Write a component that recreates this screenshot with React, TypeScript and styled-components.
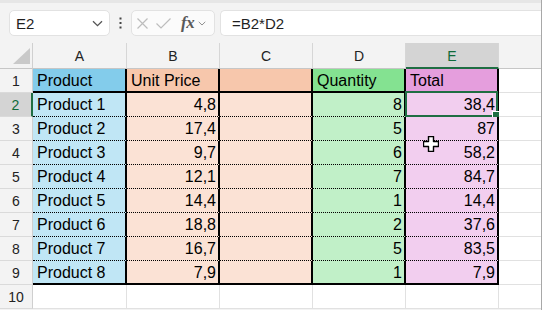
import React from 'react';
import styled, { createGlobalStyle } from 'styled-components';

const GlobalStyle = createGlobalStyle`
  html, body { margin: 0; padding: 0; background: #ffffff; }
  body { font-family: "Liberation Sans", Arial, sans-serif; }
`;

const Page = styled.div`
  width: 542px;
  height: 310px;
  box-sizing: border-box;
  border-right: 1px solid #a8a8a8;
  overflow: hidden;
  background: #f3f3f3;
  display: flex;
  flex-direction: column;
`;

const Toolbar = styled.div`
  height: 43px;
  flex: none;
  box-sizing: border-box;
  border-top: 3px solid #e6e6e6;
  padding: 7px 0 0 9px;
  display: flex;
  align-items: flex-start;
`;

const NameBox = styled.div`
  width: 101px;
  height: 26px;
  box-sizing: border-box;
  background: #fff;
  border: 1px solid #e2e2e2;
  border-radius: 5px;
  display: flex;
  align-items: center;
  justify-content: space-between;
  padding: 0 6px;
  font-size: 15px;
  color: #1f1f1f;
`;

const DotsWrap = styled.div`
  width: 21px;
  height: 26px;
  display: flex;
  align-items: center;
  justify-content: center;
`;

const FxBox = styled.div`
  width: 84px;
  height: 26px;
  box-sizing: border-box;
  background: #fbfbfb;
  border: 1px solid #e2e2e2;
  border-radius: 5px;
  display: flex;
  align-items: center;
  padding-left: 5px;
  gap: 8px;
`;

const FxLabel = styled.span`
  font-family: "Liberation Serif", "DejaVu Serif", serif;
  font-style: italic;
  font-weight: bold;
  font-size: 17px;
  color: #5a5a5a;
  margin-left: 2px;
  margin-right: -4px;
  letter-spacing: -0.5px;
`;

const Formula = styled.div`
  flex: 1;
  margin-left: 5px;
  height: 26px;
  box-sizing: border-box;
  background: #fff;
  border: 1px solid #e2e2e2;
  border-right: none;
  border-radius: 5px 0 0 5px;
  display: flex;
  align-items: center;
  padding-left: 11px;
  font-size: 15px;
  color: #1f1f1f;
`;

const Sheet = styled.div`
  position: relative;
  display: grid;
  grid-template-columns: 33px 94px 93px 93px 93px 93px 93px;
  grid-template-rows: 26px repeat(10, 24px);
  font-family: "Liberation Sans", Arial, sans-serif;
`;

const Corner = styled.div`
  box-sizing: border-box;
  border-right: 1px solid #d0d0d0;
  border-bottom: 1px solid #c6c6c6;
  display: flex;
  align-items: flex-end;
  justify-content: flex-end;
  padding: 0 2px 4px 0;
`;

const ColHead = styled.div<{ $active?: boolean }>`
  box-sizing: border-box;
  background: ${p => (p.$active ? '#d4d4d4' : '#f3f3f3')};
  color: ${p => (p.$active ? '#0f6b3a' : '#222')};
  border-right: 1px solid #d6d6d6;
  border-bottom: ${p => (p.$active ? '2px solid #1f6e43' : '1px solid #c6c6c6')};
  text-align: center;
  font-size: 14px;
  line-height: 16px;
  padding-top: 5px;
`;

const RowHead = styled.div<{ $active?: boolean }>`
  box-sizing: border-box;
  background: ${p => (p.$active ? '#d4d4d4' : '#f3f3f3')};
  color: ${p => (p.$active ? '#0f6b3a' : '#222')};
  border-right: ${p => (p.$active ? '2px solid #1f6e43' : '1px solid #cfcfcf')};
  border-bottom: 1px solid #dadada;
  text-align: center;
  font-size: 14px;
  line-height: 16px;
  padding-top: 4px;
`;

type Line = 'thick' | 'dotted' | 'grid';

const lineCss = (l: Line) =>
  l === 'thick' ? '2px solid #000' : l === 'dotted' ? '1px dotted #000' : '1px solid #e1e1e1';

const Cell = styled.div<{ $fill?: string; $num?: boolean; $bottom: Line; $right: Line }>`
  position: relative;
  box-sizing: border-box;
  background: ${p => p.$fill ?? '#fff'};
  border-right: ${p => lineCss(p.$right)};
  border-bottom: ${p => lineCss(p.$bottom)};
  padding: 3px 2px 0 4px;
  font-size: 16px;
  line-height: 18px;
  color: #000;
  text-align: ${p => (p.$num ? 'right' : 'left')};
  white-space: nowrap;
`;

const Selection = styled.div`
  position: absolute;
  left: -1px;
  top: -2px;
  right: -1px;
  bottom: -1px;
  border: 2px solid #1f6e43;
  pointer-events: none;
`;

const Handle = styled.div`
  position: absolute;
  right: -4px;
  bottom: -4px;
  width: 6px;
  height: 6px;
  background: #1f6e43;
  border: 1px solid #fff;
  box-sizing: content-box;
`;

const Cursor = styled.svg`
  position: absolute;
  left: 423px;
  top: 93px;
`;

const fills = {
  a1: '#83CCEB',
  a: '#C0E6F5',
  b1: '#F7C7AC',
  b: '#FBE2D5',
  d1: '#84E291',
  d: '#C1F0C8',
  e1: '#E59EDD',
  e: '#F2CEEF',
};

const data: [string, string, string, string][] = [
  ['Product 1', '4,8', '8', '38,4'],
  ['Product 2', '17,4', '5', '87'],
  ['Product 3', '9,7', '6', '58,2'],
  ['Product 4', '12,1', '7', '84,7'],
  ['Product 5', '14,4', '1', '14,4'],
  ['Product 6', '18,8', '2', '37,6'],
  ['Product 7', '16,7', '5', '83,5'],
  ['Product 8', '7,9', '1', '7,9'],
];

const Chevron = ({ w = 11, color = '#555' }: { w?: number; color?: string }) => (
  <svg width={w} height={7} viewBox="0 0 11 7">
    <path d="M1 1.2 L5.5 5.6 L10 1.2" fill="none" stroke={color} strokeWidth="1.3" />
  </svg>
);

export default function App() {
  const cols = ['A', 'B', 'C', 'D', 'E'];
  return (
    <>
      <GlobalStyle />
      <Page>
        <Toolbar>
          <NameBox>
            <span>E2</span>
            <Chevron />
          </NameBox>
          <DotsWrap>
            <svg width="3" height="12" viewBox="0 0 3 12">
              <rect x="0.5" y="0.5" width="2" height="2" fill="#444" />
              <rect x="0.5" y="5" width="2" height="2" fill="#444" />
              <rect x="0.5" y="9.5" width="2" height="2" fill="#444" />
            </svg>
          </DotsWrap>
          <FxBox>
            <svg width="11" height="11" viewBox="0 0 11 11">
              <path d="M0.5 0.5 L10.5 10.5 M10.5 0.5 L0.5 10.5" stroke="#bdbdbd" strokeWidth="1.2" />
            </svg>
            <svg width="15" height="11" viewBox="0 0 15 11">
              <path d="M0.5 5.5 L5 10 L14.5 0.5" fill="none" stroke="#bdbdbd" strokeWidth="1.2" />
            </svg>
            <FxLabel>fx</FxLabel>
            <Chevron w={8} color="#8a8a8a" />
          </FxBox>
          <Formula>=B2*D2</Formula>
        </Toolbar>
        <Sheet>
          <Corner>
            <svg width="17" height="16" viewBox="0 0 17 16">
              <path d="M17 0 L17 16 L0 16 Z" fill="#c9c9c9" />
            </svg>
          </Corner>
          {cols.map(c => (
            <ColHead key={c} $active={c === 'E'}>
              {c}
            </ColHead>
          ))}
          <ColHead />

          <RowHead>1</RowHead>
          <Cell $fill={fills.a1} $right="thick" $bottom="thick">Product</Cell>
          <Cell $fill={fills.b1} $right="thick" $bottom="thick">Unit Price</Cell>
          <Cell $fill={fills.b1} $right="thick" $bottom="thick" />
          <Cell $fill={fills.d1} $right="thick" $bottom="thick">Quantity</Cell>
          <Cell $fill={fills.e1} $right="thick" $bottom="thick">Total</Cell>
          <Cell $right="grid" $bottom="grid" />

          {data.map((r, i) => {
            const bottom: Line = i === data.length - 1 ? 'thick' : 'dotted';
            const row = i + 2;
            return (
              <React.Fragment key={row}>
                <RowHead $active={row === 2}>{row}</RowHead>
                <Cell $fill={fills.a} $right="thick" $bottom={bottom}>{r[0]}</Cell>
                <Cell $fill={fills.b} $right="thick" $bottom={bottom} $num>{r[1]}</Cell>
                <Cell $fill={fills.b} $right="thick" $bottom={bottom} />
                <Cell $fill={fills.d} $right="thick" $bottom={bottom} $num>{r[2]}</Cell>
                <Cell $fill={fills.e} $right="thick" $bottom={bottom} $num>
                  {r[3]}
                  {row === 2 && (
                    <Selection>
                      <Handle />
                    </Selection>
                  )}
                </Cell>
                <Cell $right="grid" $bottom="grid" />
              </React.Fragment>
            );
          })}

          <RowHead>10</RowHead>
          {[...cols, 'F'].map(c => (
            <Cell key={c} $right="grid" $bottom="grid" />
          ))}

          <Cursor width="16" height="16" viewBox="0 0 16 16">
            <path
              d="M5.5 0.5 H10.5 V5.5 H15.5 V10.5 H10.5 V15.5 H5.5 V10.5 H0.5 V5.5 H5.5 Z"
              fill="#fff"
              stroke="#000"
              strokeWidth="1.4"
              strokeLinejoin="round"
            />
          </Cursor>
        </Sheet>
      </Page>
    </>
  );
}
